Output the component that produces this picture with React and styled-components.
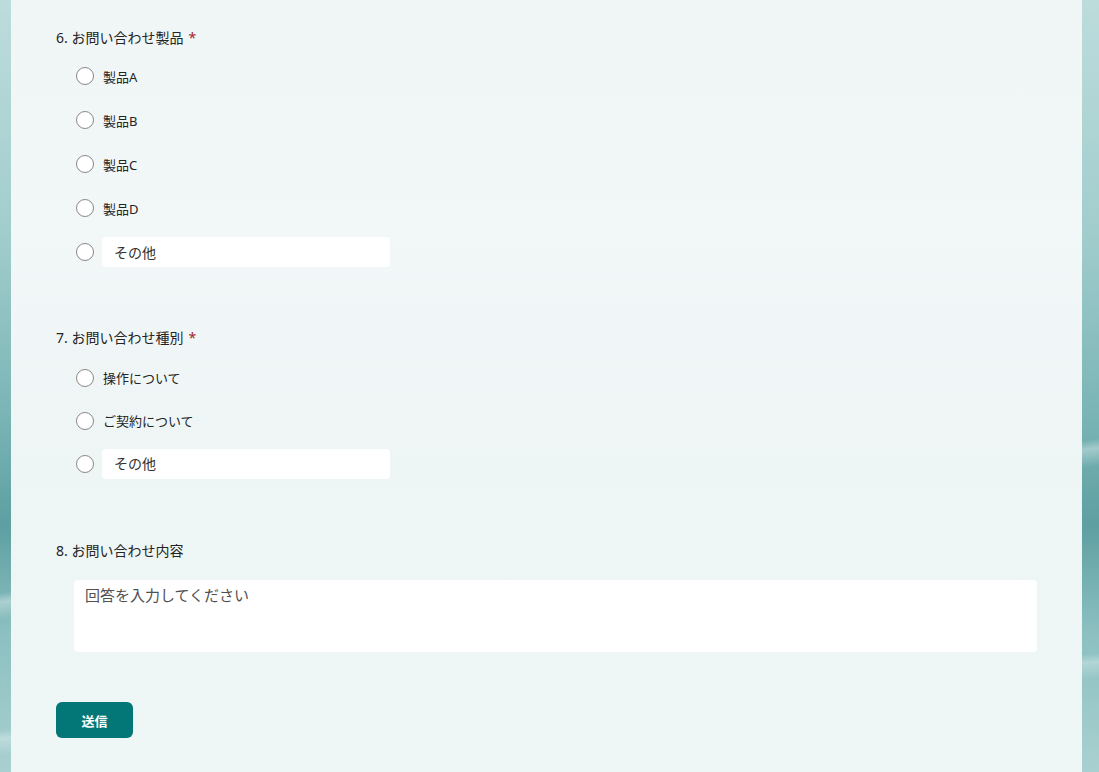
import React from 'react';
import styled, { createGlobalStyle } from 'styled-components';

const GlobalStyle = createGlobalStyle`
  html, body {
    margin: 0;
    padding: 0;
  }
  body {
    min-height: 772px;
    font-family: "Segoe UI", "Noto Sans", "Noto Sans CJK JP", sans-serif;
    background:
      linear-gradient(172deg, transparent 64%, rgba(255, 255, 255, 0.35) 65%, transparent 67%),
      linear-gradient(176deg, transparent 86%, rgba(255, 255, 255, 0.3) 87%, transparent 89%),
      linear-gradient(180deg, #bddcdc 0%, #a2cdcd 30%, #78b3b4 55%, #5e9fa1 68%, #8cc0c1 82%, #a9d0d0 100%);
  }
`;

const Page = styled.div`
  display: flex;
  justify-content: center;
  padding: 0 17px 0 11px;
  min-height: 772px;
`;

const Card = styled.main`
  flex: 1;
  box-sizing: border-box;
  padding: 28px 45px 34px;
  background: linear-gradient(180deg, #f0f6f6 0%, #f2f7f8 30%, #eef5f5 60%, #eff6f6 100%);
  color: #242424;
`;

const Question = styled.section`
  margin-bottom: ${p => p.$gap || 54}px;
`;

const Title = styled.div`
  font-size: 14px;
  line-height: 20px;
  color: #242424;
`;

const Required = styled.span`
  color: #a4262c;
  margin-left: 5px;
`;

const Options = styled.div`
  margin-top: ${p => p.$top || 6}px;
  padding-left: 20px;
`;

const OptionRow = styled.label`
  display: flex;
  align-items: center;
  height: ${p => p.$h || 44}px;
  cursor: pointer;
`;

const Radio = styled.span`
  width: 16px;
  height: 16px;
  flex: none;
  border: 1px solid #8a8886;
  border-radius: 50%;
  background: #fff;
`;

const OptionText = styled.span`
  margin-left: 9px;
  font-size: 13px;
  color: #242424;
`;

const OtherInput = styled.input`
  margin-left: 8px;
  width: 288px;
  height: 30px;
  box-sizing: border-box;
  border: none;
  border-radius: 4px;
  background: #fff;
  padding: 0 12px;
  font-family: inherit;
  font-size: 14px;
  color: #242424;
  outline: none;
  &::placeholder {
    color: #323130;
  }
`;

const AnswerArea = styled.textarea`
  display: block;
  margin: 19px 0 0 18px;
  width: calc(100% - 18px);
  height: 72px;
  box-sizing: border-box;
  border: none;
  border-radius: 4px;
  background: #fff;
  padding: 5px 11px;
  font-family: inherit;
  font-size: 15px;
  line-height: 20px;
  resize: none;
  outline: none;
  &::placeholder {
    color: #505050;
  }
`;

const SubmitButton = styled.button`
  width: 77px;
  height: 36px;
  border: none;
  border-radius: 6px;
  background: #037777;
  color: #fff;
  font-family: inherit;
  font-size: 13px;
  font-weight: 700;
  cursor: pointer;
`;

const Option = ({ label, other, h }) => (
  <OptionRow $h={h}>
    <Radio />
    {other ? <OtherInput placeholder="その他" /> : <OptionText>{label}</OptionText>}
  </OptionRow>
);

const products = ['製品A', '製品B', '製品C', '製品D'];
const kinds = ['操作について', 'ご契約について'];

export default function App() {
  return (
    <>
      <GlobalStyle />
      <Page>
        <Card>
          <Question>
            <Title>
              6. お問い合わせ製品<Required>*</Required>
            </Title>
            <Options>
              {products.map(p => (
                <Option key={p} label={p} />
              ))}
              <Option other />
            </Options>
          </Question>

          <Question $gap={56}>
            <Title>
              7. お問い合わせ種別<Required>*</Required>
            </Title>
            <Options $top={8}>
              {kinds.map(k => (
                <Option key={k} label={k} h={43} />
              ))}
              <Option other h={43} />
            </Options>
          </Question>

          <Question $gap={50}>
            <Title>8. お問い合わせ内容</Title>
            <AnswerArea placeholder="回答を入力してください" />
          </Question>

          <SubmitButton>送信</SubmitButton>
        </Card>
      </Page>
    </>
  );
}
